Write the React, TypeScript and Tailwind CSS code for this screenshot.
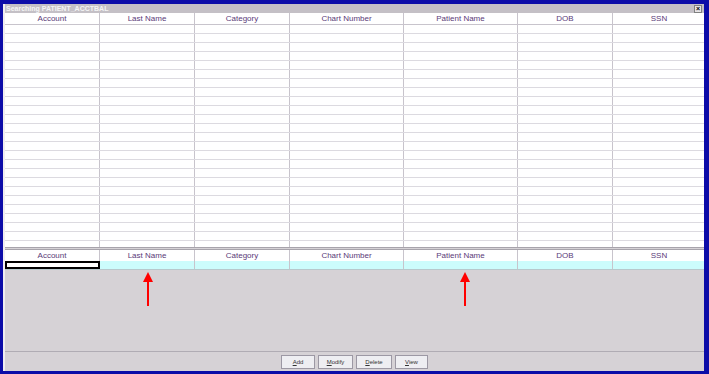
import React from "react";

const cols = [
  { name: "Account", w: 95 },
  { name: "Last Name", w: 95 },
  { name: "Category", w: 95 },
  { name: "Chart Number", w: 114 },
  { name: "Patient Name", w: 114 },
  { name: "DOB", w: 95 },
  { name: "SSN", w: 92 },
];

function Arrow() {
  return (
    <svg width="10" height="34" viewBox="0 0 10 34">
      <polygon points="5,0 10,10 0,10" fill="#ff0000" />
      <rect x="4" y="9" width="2" height="25" fill="#ff0000" />
    </svg>
  );
}

export default function App() {
  const rows = Array.from({ length: 24 });
  return (
    <div
      className="w-[709px] h-[374px] bg-[#0c0ca8] pl-[3px] pr-[5px] pt-[4px] pb-[3px] overflow-hidden"
      style={{ fontFamily: "'Liberation Sans', Arial, sans-serif" }}
    >
      <div className="w-full h-full flex flex-col bg-[#d6d2d6] border-l-2 border-[#f0eef0]">
        {/* title bar */}
        <div className="h-[9px] flex items-center justify-between bg-[#c4c0c6] pl-[1px] pr-[2px]">
          <span className="text-[7px] leading-none text-[#f4f4f4] font-bold">Searching PATIENT_ACCTBAL</span>
          <div className="w-[8px] h-[8px] bg-[#e6e4e6] border border-[#808080] flex items-center justify-center text-[7px] leading-none text-black font-bold">×</div>
        </div>
        {/* upper table */}
        <div className="flex flex-col bg-white border-b border-[#a8a4ac]">
          <div className="flex h-[12px] border-b border-[#c8c4cc]">
            {cols.map((c, i) => (
              <div
                key={i}
                style={{ width: c.w }}
                className="shrink-0 text-center text-[8px] leading-[12px] text-[#5a3a78] border-r border-[#c8c4cc] last:border-r-0"
              >
                {c.name}
              </div>
            ))}
          </div>
          {rows.map((_, r) => (
            <div key={r} className="flex h-[9px] border-b border-[#dcdae0]">
              {cols.map((c, i) => (
                <div key={i} style={{ width: c.w }} className="shrink-0 border-r border-[#c8c4cc] last:border-r-0" />
              ))}
            </div>
          ))}
          <div className="flex h-[6px]">
            {cols.map((c, i) => (
              <div key={i} style={{ width: c.w }} className="shrink-0 border-r border-[#c8c4cc] last:border-r-0" />
            ))}
          </div>
        </div>
        <div className="h-[2px] bg-[#d6d2d6] border-b border-[#a8a4ac]" />
        {/* lower table */}
        <div className="flex h-[11px] bg-white">
          {cols.map((c, i) => (
            <div
              key={i}
              style={{ width: c.w }}
              className="shrink-0 text-center text-[8px] leading-[11px] text-[#5a3a78] border-r border-[#c8c4cc] last:border-r-0"
            >
              {c.name}
            </div>
          ))}
        </div>
        <div className="flex h-[9px] bg-[#ccfcfc] border-b border-[#b8c8cc]">
          {cols.map((c, i) => (
            <div
              key={i}
              style={{ width: c.w }}
              className={
                i === 0
                  ? "shrink-0 bg-white border-2 border-black"
                  : "shrink-0 border-r border-[#c8c4cc] last:border-r-0"
              }
            />
          ))}
        </div>
        {/* gray area with arrows */}
        <div className="flex-1 flex flex-col border-b border-[#b0acb4]">
          <div className="flex pt-[2px]">
            <div className="w-[138px] shrink-0" />
            <Arrow />
            <div className="w-[307px] shrink-0" />
            <Arrow />
          </div>
        </div>
        {/* buttons */}
        <div className="h-[19px] flex items-start justify-center gap-[3px] pt-[3px]">
          {[
            ["A", "dd", 34],
            ["M", "odify", 35],
            ["D", "elete", 36],
            ["V", "iew", 33],
          ].map(([u, rest, w], i) => (
            <div
              key={i}
              style={{ width: w as number }}
              className="h-[14px] bg-[#eeeef2] border border-[#9c98a4] text-[6px] leading-[12px] text-center text-[#333]"
            >
              <span className="underline">{u}</span>
              {rest}
            </div>
          ))}
        </div>
      </div>
    </div>
  );
}
